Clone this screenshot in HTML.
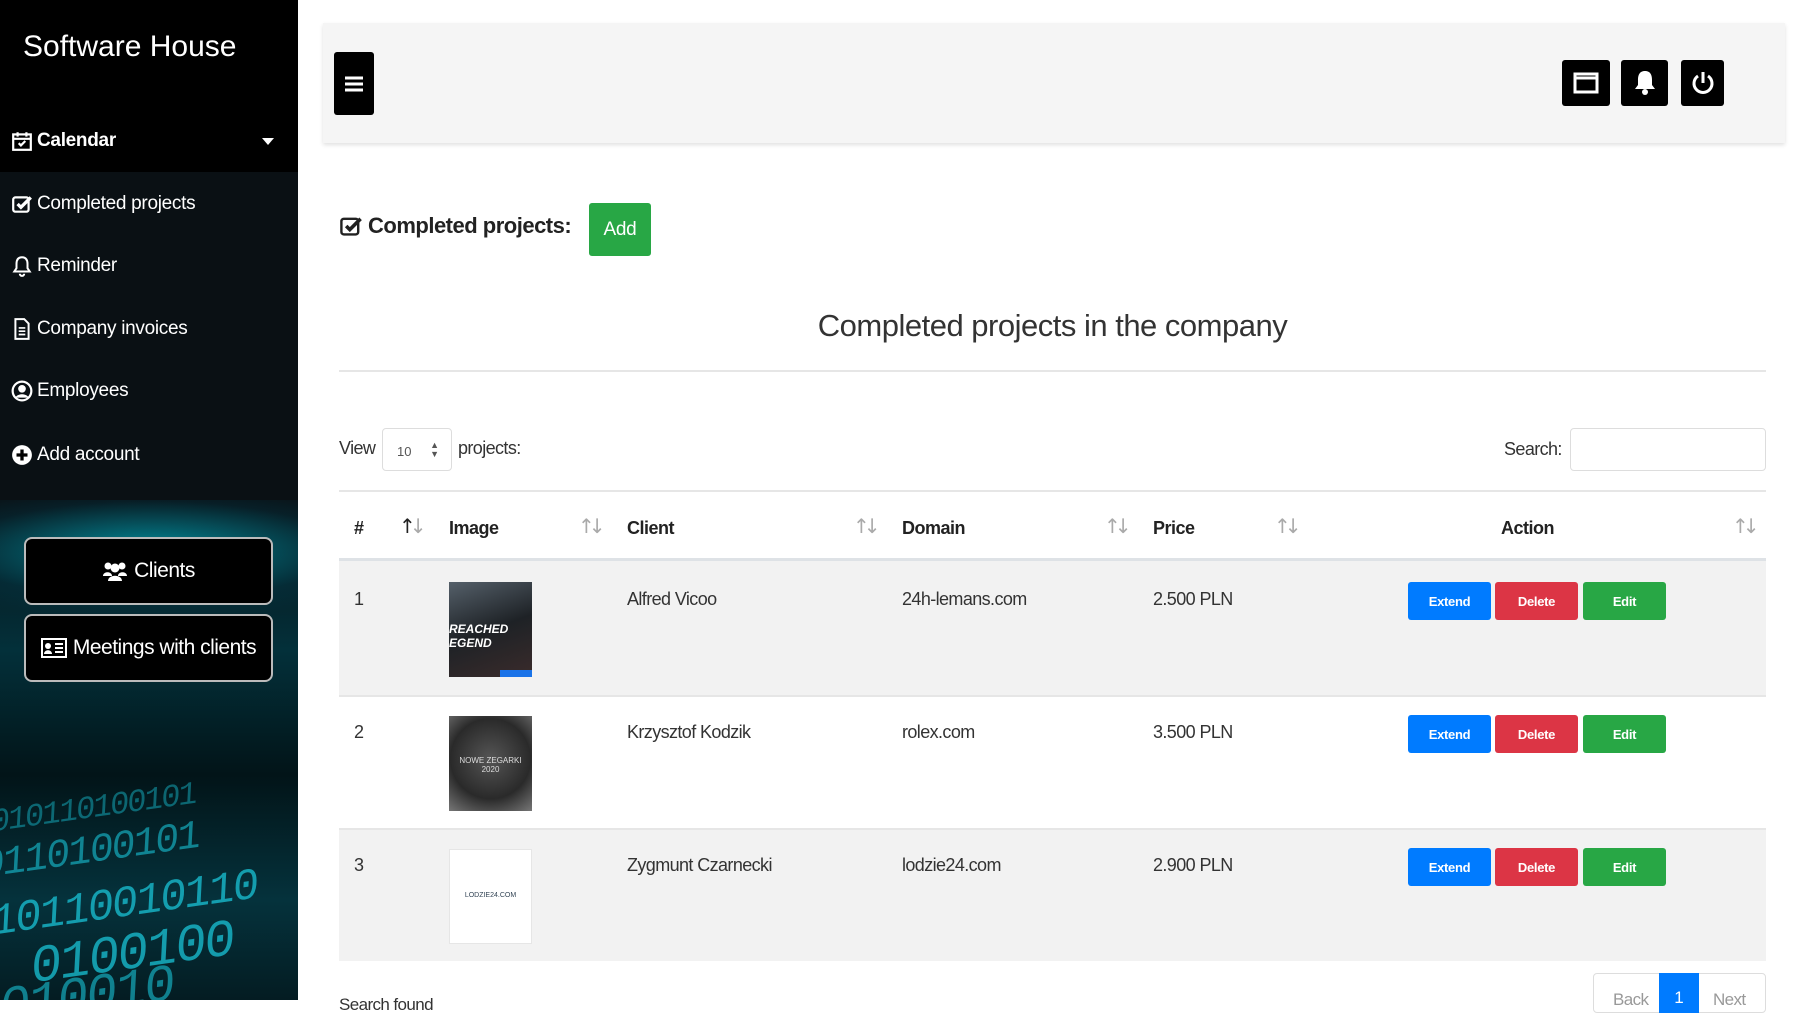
<!DOCTYPE html>
<html><head><meta charset="utf-8"><style>
*{box-sizing:border-box;margin:0;padding:0}
body{width:1800px;height:1000px;overflow:hidden;background:#fff;font-family:"Liberation Sans",sans-serif;color:#333;position:relative}
.sb{position:absolute;left:0;top:0;width:298px;height:1000px;background:#0a1014;overflow:hidden}
.sb .top{position:absolute;left:0;top:0;width:298px;height:172px;background:#000}
.sb h1{position:absolute;left:23px;top:30px;color:#fff;font:400 30px "Liberation Sans",sans-serif}
.glow{position:absolute;left:0;top:500px;width:298px;height:500px;background:radial-gradient(ellipse 280px 70px at 150px 50px,rgba(0,210,230,.6),rgba(0,70,90,.25) 70%,transparent),linear-gradient(#0a1014,#03303a 30%,#021418 55%,#05323c 80%,#041c22)}
.bin{position:absolute;color:#19c3d6;font:italic 400 40px "Liberation Mono",monospace;white-space:nowrap;opacity:.75;transform:rotate(-8deg);letter-spacing:-2px}
.mi{position:absolute;left:11px;color:#fff;font:19px "Liberation Sans",sans-serif;display:flex;align-items:center;gap:4px;letter-spacing:-.3px}
.mi svg{width:22px;height:22px}
.sbtn{position:absolute;left:24px;width:249px;height:68px;background:#000;border:2px solid #bbb;border-radius:8px;color:#fff;font:21px "Liberation Sans",sans-serif;letter-spacing:-.5px;display:flex;align-items:center;justify-content:center;gap:6px}
.topbar{position:absolute;left:323px;top:23px;width:1462px;height:120px;background:#f5f5f5;box-shadow:0 2px 4px rgba(0,0,0,.12)}
.ib{position:absolute;background:#000;border-radius:3px;display:flex;align-items:center;justify-content:center}
.btn{position:absolute;color:#fff;font:700 13px "Liberation Sans",sans-serif;display:flex;align-items:center;justify-content:center;border-radius:3px;height:38px;width:83px;letter-spacing:-.3px}
.th{position:absolute;top:518px;font:700 18px "Liberation Sans",sans-serif;color:#222;letter-spacing:-.5px}
.ar{position:absolute;top:514px;color:#aaa;font:20px "DejaVu Sans",sans-serif;letter-spacing:-6px}
.td{position:absolute;font:18px "Liberation Sans",sans-serif;color:#333;letter-spacing:-.6px}
.row{position:absolute;left:339px;width:1427px}
</style></head><body>
<div class="sb">
 <div class="glow"></div>
 <div class="bin" style="left:-10px;top:790px;font-size:32px;opacity:.45">010110100101</div>
 <div class="bin" style="left:-20px;top:830px;font-size:40px;opacity:.6">0110100101</div>
 <div class="bin" style="left:-10px;top:880px;font-size:44px">10110010110</div>
 <div class="bin" style="left:30px;top:925px;font-size:52px">0100100</div>
 <div class="bin" style="left:-30px;top:970px;font-size:52px;opacity:.6">1010010</div>
 <div class="top"></div>
 <h1>Software House</h1>
 <div class="mi" style="top:130px;font-weight:700"><svg viewBox="0 0 20 20"><rect x="2" y="4" width="16" height="14" fill="none" stroke="#fff" stroke-width="2"/><path d="M2 8h16M6 2v4M14 2v4M7 12l2 2 4-4" stroke="#fff" stroke-width="2" fill="none"/></svg>Calendar</div>
 <div style="position:absolute;left:262px;top:138px;border:6px solid transparent;border-top:7px solid #fff"></div>
 <div class="mi" style="top:193px"><svg viewBox="0 0 20 20"><rect x="2" y="4" width="14" height="13" rx="2" fill="none" stroke="#fff" stroke-width="2"/><path d="M6 10l3 3 9-9" stroke="#fff" stroke-width="3" fill="none"/></svg>Completed projects</div>
 <div class="mi" style="top:255px"><svg viewBox="0 0 20 20"><path d="M10 2c-4 0-5 3-5 6v4l-2 3h14l-2-3V8c0-3-1-6-5-6zM8 17a2 2 0 004 0" fill="none" stroke="#fff" stroke-width="1.8"/></svg>Reminder</div>
 <div class="mi" style="top:318px"><svg viewBox="0 0 20 20"><path d="M4 1h8l4 4v14H4z" fill="none" stroke="#fff" stroke-width="1.8"/><path d="M7 9h6M7 12h6M7 15h6" stroke="#fff" stroke-width="1.5"/></svg>Company invoices</div>
 <div class="mi" style="top:380px"><svg viewBox="0 0 20 20"><circle cx="10" cy="10" r="8.5" fill="none" stroke="#fff" stroke-width="2"/><circle cx="10" cy="8" r="3.5" fill="#fff"/><path d="M4 16c2-4 10-4 12 0" fill="#fff"/></svg>Employees</div>
 <div class="mi" style="top:444px"><svg viewBox="0 0 20 20"><circle cx="10" cy="10" r="9" fill="#fff"/><path d="M10 5v10M5 10h10" stroke="#000" stroke-width="3"/></svg>Add account</div>
 <div class="sbtn" style="top:537px"><svg width="26" height="22" viewBox="0 0 26 22"><circle cx="6" cy="6" r="3.5" fill="#fff"/><circle cx="20" cy="6" r="3.5" fill="#fff"/><circle cx="13" cy="8" r="4.5" fill="#fff"/><path d="M1 16c0-5 9-5 9 0zM16 16c0-5 9-5 9 0zM6 21c0-7 14-7 14 0z" fill="#fff"/></svg>Clients</div>
 <div class="sbtn" style="top:614px"><svg width="26" height="20" viewBox="0 0 26 20"><rect x="1" y="1" width="24" height="18" fill="none" stroke="#fff" stroke-width="2"/><circle cx="7" cy="8" r="3" fill="#fff"/><path d="M3 16c0-5 8-5 8 0z" fill="#fff"/><path d="M14 6h8M14 10h8M14 14h8" stroke="#fff" stroke-width="2"/></svg>Meetings with clients</div>
</div>
<div class="topbar"></div>
<div class="ib" style="left:334px;top:52px;width:40px;height:63px"><svg width="20" height="18"><path d="M1 3h18M1 9h18M1 15h18" stroke="#fff" stroke-width="3"/></svg></div>
<div class="ib" style="left:1562px;top:60px;width:48px;height:46px"><svg width="26" height="22"><rect x="2" y="2" width="22" height="18" fill="none" stroke="#fff" stroke-width="3"/><path d="M2 6h22" stroke="#fff" stroke-width="3"/></svg></div>
<div class="ib" style="left:1621px;top:60px;width:47px;height:46px"><svg width="24" height="26" viewBox="0 0 24 26"><path d="M12 1c-6 0-7 5-7 9v5l-3 4h20l-3-4v-5c0-4-1-9-7-9z" fill="#fff"/><circle cx="12" cy="22" r="3" fill="#fff"/></svg></div>
<div class="ib" style="left:1681px;top:60px;width:43px;height:46px"><svg width="24" height="24" viewBox="0 0 24 24"><path d="M7 5a9 9 0 1010 0" fill="none" stroke="#fff" stroke-width="3"/><path d="M12 1v11" stroke="#fff" stroke-width="3"/></svg></div>

<div style="position:absolute;left:339px;top:213px;font:700 22px 'Liberation Sans',sans-serif;letter-spacing:-.5px;color:#222;display:flex;align-items:center;gap:5px"><svg width="24" height="24" viewBox="0 0 20 20"><rect x="2" y="4" width="14" height="13" rx="2" fill="none" stroke="#222" stroke-width="2"/><path d="M6 10l3 3 9-9" stroke="#222" stroke-width="3" fill="none"/></svg>Completed projects:</div>
<div class="btn" style="left:589px;top:203px;width:62px;height:53px;background:#28a745;font-weight:400;font-size:19px">Add</div>
<div style="position:absolute;left:339px;width:1427px;top:308px;text-align:center;font:31px 'Liberation Sans',sans-serif;letter-spacing:-.5px;color:#333">Completed projects in the company</div>
<div style="position:absolute;left:339px;width:1427px;top:370px;height:2px;background:#e6e6e6"></div>
<div class="td" style="left:339px;top:438px;font-size:18px">View</div>
<div style="position:absolute;left:382px;top:428px;width:70px;height:43px;border:1px solid #ddd;border-radius:4px;font:13px 'Liberation Sans';color:#555;padding:15px 0 0 14px">10<span style="position:absolute;right:12px;top:12px;font-size:9px;line-height:9px">▲<br>▼</span></div>
<div class="td" style="left:458px;top:438px;font-size:18px">projects:</div>
<div class="td" style="left:1504px;top:439px;font-size:18px">Search:</div>
<div style="position:absolute;left:1570px;top:428px;width:196px;height:43px;border:1px solid #ddd;border-radius:4px"></div>
<div style="position:absolute;left:339px;width:1427px;top:490px;height:2px;background:#e6e6e6"></div>
<div class="th" style="left:354px">#</div><div class="ar" style="left:399px;color:#222">↑<span style="color:#aaa">↓</span></div>
<div class="th" style="left:449px">Image</div><div class="ar" style="left:578px">↑↓</div>
<div class="th" style="left:627px">Client</div><div class="ar" style="left:853px">↑↓</div>
<div class="th" style="left:902px">Domain</div><div class="ar" style="left:1104px">↑↓</div>
<div class="th" style="left:1153px">Price</div><div class="ar" style="left:1274px">↑↓</div>
<div class="th" style="left:1501px">Action</div><div class="ar" style="left:1732px">↑↓</div>
<div style="position:absolute;left:339px;width:1427px;top:558px;height:3px;background:#dee2e6"></div>
<div class="row" style="top:561px;height:134px;background:#f2f2f2"></div>
<div class="row" style="top:695px;height:2px;background:#e6e6e6"></div>
<div class="row" style="top:828px;height:133px;background:#f2f2f2;border-top:2px solid #e6e6e6"></div>

<div class="td" style="left:354px;top:589px">1</div>
<div style="position:absolute;left:449px;top:582px;width:83px;height:95px;background:linear-gradient(160deg,#55606a,#1e2226 50%,#3a2b2b);overflow:hidden"><div style="position:absolute;left:0;top:40px;color:#fff;font:italic 700 12px 'Liberation Sans'">REACHED<br>EGEND</div><div style="position:absolute;right:0;bottom:0;width:32px;height:7px;background:#1a73e8"></div></div>
<div class="td" style="left:627px;top:589px">Alfred Vicoo</div>
<div class="td" style="left:902px;top:589px">24h-lemans.com</div>
<div class="td" style="left:1153px;top:589px">2.500 PLN</div>

<div class="td" style="left:354px;top:722px">2</div>
<div style="position:absolute;left:449px;top:716px;width:83px;height:95px;background:radial-gradient(circle at 50% 45%,#555,#2a2a2a 60%,#777);color:#ddd;font:8px 'Liberation Sans';text-align:center;padding-top:40px">NOWE ZEGARKI<br>2020</div>
<div class="td" style="left:627px;top:722px">Krzysztof Kodzik</div>
<div class="td" style="left:902px;top:722px">rolex.com</div>
<div class="td" style="left:1153px;top:722px">3.500 PLN</div>

<div class="td" style="left:354px;top:855px">3</div>
<div style="position:absolute;left:449px;top:849px;width:83px;height:95px;background:#fff;border:1px solid #e6e6e6;font:7px 'Liberation Sans';text-align:center;padding-top:42px"><span style="color:#345">LODZIE24.COM</span></div>
<div class="td" style="left:627px;top:855px">Zygmunt Czarnecki</div>
<div class="td" style="left:902px;top:855px">lodzie24.com</div>
<div class="td" style="left:1153px;top:855px">2.900 PLN</div>

<div class="btn" style="left:1408px;top:582px;background:#007bff">Extend</div><div class="btn" style="left:1495px;top:582px;background:#dc3545">Delete</div><div class="btn" style="left:1583px;top:582px;background:#28a745">Edit</div>
<div class="btn" style="left:1408px;top:715px;background:#007bff">Extend</div><div class="btn" style="left:1495px;top:715px;background:#dc3545">Delete</div><div class="btn" style="left:1583px;top:715px;background:#28a745">Edit</div>
<div class="btn" style="left:1408px;top:848px;background:#007bff">Extend</div><div class="btn" style="left:1495px;top:848px;background:#dc3545">Delete</div><div class="btn" style="left:1583px;top:848px;background:#28a745">Edit</div>

<div class="td" style="left:339px;top:995px;font-size:17px">Search found</div>
<div style="position:absolute;left:1593px;top:973px;width:173px;height:40px;border:1px solid #ddd;border-radius:4px"></div>
<div class="td" style="left:1613px;top:990px;color:#999;font-size:17px">Back</div>
<div style="position:absolute;left:1659px;top:973px;width:40px;height:40px;background:#007bff;color:#fff;font:17px 'Liberation Sans';text-align:center;padding-top:15px">1</div>
<div class="td" style="left:1713px;top:990px;color:#999;font-size:17px">Next</div>
</body></html>
